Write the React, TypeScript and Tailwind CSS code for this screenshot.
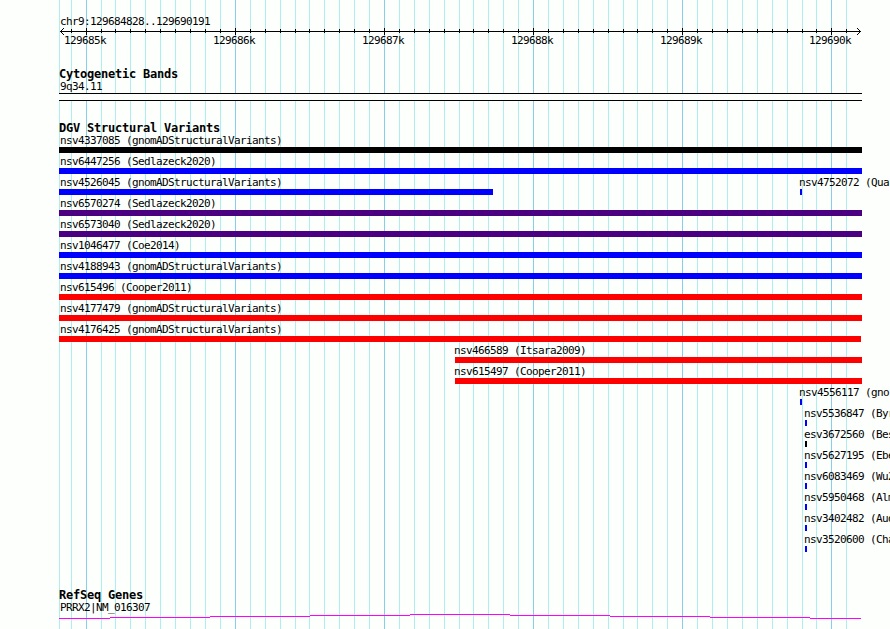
type Feature = {
  label: string;
  left: string;
  width: string;
  color: string;
  indent: string;
};

const MAJOR_TICKS = [86, 235, 384, 533, 682, 831];

const MINOR_TICKS = [
  71, 101, 115, 130, 145, 160, 175, 190, 205, 220, 250, 265, 280, 295, 309, 324,
  339, 354, 369, 399, 414, 429, 444, 459, 473, 488, 503, 518, 548, 563, 578, 593,
  608, 623, 637, 652, 667, 697, 712, 727, 742, 757, 772, 787, 802, 816, 846,
];

const RULER_LABELS = ["129685k", "129686k", "129687k", "129688k", "129689k", "129690k"];

// Variant that starts at the left edge of the panel
const full = (label: string, color: string, width = "w-[803px]"): Feature => ({
  label,
  left: "ml-[59px]",
  width,
  color,
  indent: "ml-px",
});

const partial = (
  label: string,
  left: string,
  width = "w-[2px]",
  color = "bg-[#0000ff]"
): Feature => ({
  label,
  left,
  width,
  color,
  indent: "-ml-px",
});

// Each inner array is one packed row of the track
const variantRows: Feature[][] = [
  [full("nsv4337085 (gnomADStructuralVariants)", "bg-black")],
  [full("nsv6447256 (Sedlazeck2020)", "bg-[#0000ff]")],
  [
    full("nsv4526045 (gnomADStructuralVariants)", "bg-[#0000ff]", "w-[434px]"),
    partial("nsv4752072 (Qua", "ml-[307px]"),
  ],
  [full("nsv6570274 (Sedlazeck2020)", "bg-[#4b0082]")],
  [full("nsv6573040 (Sedlazeck2020)", "bg-[#4b0082]")],
  [full("nsv1046477 (Coe2014)", "bg-[#0000ff]")],
  [full("nsv4188943 (gnomADStructuralVariants)", "bg-[#0000ff]")],
  [full("nsv615496 (Cooper2011)", "bg-[#ff0000]")],
  [full("nsv4177479 (gnomADStructuralVariants)", "bg-[#ff0000]")],
  [full("nsv4176425 (gnomADStructuralVariants)", "bg-[#ff0000]", "w-[802px]")],
  [partial("nsv466589 (Itsara2009)", "ml-[455px]", "w-[407px]", "bg-[#ff0000]")],
  [partial("nsv615497 (Cooper2011)", "ml-[455px]", "w-[407px]", "bg-[#ff0000]")],
  [partial("nsv4556117 (gno", "ml-[800px]")],
  [partial("nsv5536847 (Byr", "ml-[805px]")],
  [partial("esv3672560 (Bes", "ml-[805px]", "w-[2px]", "bg-black")],
  [partial("nsv5627195 (Ebe", "ml-[805px]")],
  [partial("nsv6083469 (Wu2", "ml-[805px]")],
  [partial("nsv5950468 (Alm", "ml-[805px]")],
  [partial("nsv3402482 (Aud", "ml-[805px]")],
  [partial("nsv3520600 (Cha", "ml-[805px]")],
];

function GridLines() {
  return (
    <svg
      className="pointer-events-none absolute inset-0"
      width="890"
      height="629"
      shapeRendering="crispEdges"
    >
      {[59, ...MINOR_TICKS].map((x) => (
        <rect key={x} x={x} y="0" width="1" height="629" fill="#afeeee" />
      ))}
      {MAJOR_TICKS.map((x) => (
        <rect key={x} x={x} y="0" width="1" height="629" fill="#87ceeb" />
      ))}
    </svg>
  );
}

function Ruler() {
  return (
    <svg className="block" width="890" height="7" shapeRendering="crispEdges">
      <rect x="60" y="3" width="801" height="1" />
      {MINOR_TICKS.map((x) => (
        <rect key={x} x={x} y="1" width="1" height="4" />
      ))}
      {MAJOR_TICKS.map((x) => (
        <rect key={x} x={x} y="0" width="1" height="7" />
      ))}
      {[1, 2, 3].map((d) => (
        <g key={d}>
          <rect x={60 + d} y={3 - d} width="1" height="1" />
          <rect x={60 + d} y={3 + d} width="1" height="1" />
          <rect x={860 - d} y={3 - d} width="1" height="1" />
          <rect x={860 - d} y={3 + d} width="1" height="1" />
        </g>
      ))}
    </svg>
  );
}

function TrackTitle({ children }: { children: string }) {
  return (
    <h2 className="h-[12px] pl-[59px] text-[12px] leading-[12px] font-bold tracking-[-0.224px]">
      {children}
    </h2>
  );
}

function VariantRow({ features }: { features: Feature[] }) {
  return (
    <div className="flex h-[21px]">
      {features.map((f) => (
        <div key={f.label} className={`shrink-0 ${f.left} ${f.width}`}>
          <div className={`h-[13px] leading-[13px] whitespace-nowrap ${f.indent}`}>{f.label}</div>
          <div className={`h-[6px] ${f.color}`} />
        </div>
      ))}
    </div>
  );
}

function GeneTrack() {
  return (
    <svg className="block" width="890" height="5" shapeRendering="crispEdges" fill="#ff00ff">
      <rect x="59" y="4" width="51" height="1" />
      <rect x="110" y="3" width="100" height="1" />
      <rect x="210" y="2" width="100" height="1" />
      <rect x="310" y="1" width="100" height="1" />
      <rect x="410" y="0" width="100" height="1" />
      <rect x="510" y="1" width="100" height="1" />
      <rect x="610" y="2" width="100" height="1" />
      <rect x="710" y="3" width="100" height="1" />
      <rect x="810" y="4" width="51" height="1" />
    </svg>
  );
}

export default function App() {
  return (
    <div className="relative h-[629px] w-[890px] overflow-hidden bg-[#fdfffc] font-['DejaVu_Sans_Mono',monospace] text-[11px] tracking-[-0.623px] text-black">
      <GridLines />
      <div className="relative flex flex-col">
        <header className="pt-[15px]">
          <div className="h-[13px] pl-[60px] leading-[13px]">chr9:129684828..129690191</div>
          <Ruler />
          <div className="flex h-[13px] pl-[64px] leading-[11px]">
            {RULER_LABELS.map((label) => (
              <span key={label} className="w-[149px] shrink-0">
                {label}
              </span>
            ))}
          </div>
        </header>

        <section className="pt-[20px]">
          <TrackTitle>Cytogenetic Bands</TrackTitle>
          <div className="h-[13px] pl-[60px] leading-[13px]">9q34.11</div>
          <div className="ml-[59px] h-[8px] w-[803px] border-y border-black bg-[#fdfffc]" />
        </section>

        <section className="pt-[21px]">
          <TrackTitle>DGV Structural Variants</TrackTitle>
          {variantRows.map((row) => (
            <VariantRow key={row[0].label} features={row} />
          ))}
        </section>

        <section className="pt-[35px]">
          <TrackTitle>RefSeq Genes</TrackTitle>
          <div className="h-[13px] pl-[60px] leading-[13px]">PRRX2|NM_016307</div>
          <GeneTrack />
        </section>
      </div>
    </div>
  );
}
